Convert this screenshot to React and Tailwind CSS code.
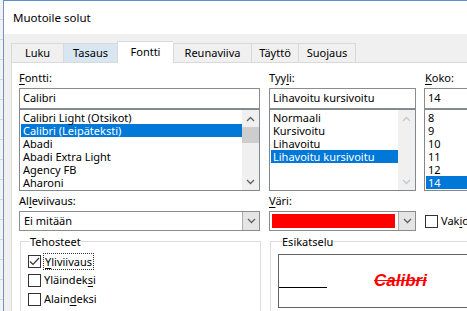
import React from "react";

const Chev = ({ up, color = "#606060" }) => (
  <svg width="9" height="6" viewBox="0 0 9 6">
    <path d={up ? "M1 5 L4.5 1.5 L8 5" : "M1 1 L4.5 4.5 L8 1"} fill="none" stroke={color} strokeWidth="1.3" />
  </svg>
);

const Row = ({ children, sel }) => (
  <div className={"h-[13px] leading-[13px] pl-[2px] whitespace-nowrap " + (sel ? "bg-[#0078d7] text-white" : "")}>{children}</div>
);

const Check = ({ checked }) => (
  <div className="w-[13px] h-[13px] border border-[#333333] bg-white flex items-center justify-center shrink-0">
    {checked && (
      <svg width="11" height="11" viewBox="0 0 11 11">
        <path d="M1 5.5 L4 8.5 L10 2" fill="none" stroke="#333333" strokeWidth="1.2" />
      </svg>
    )}
  </div>
);

const Tab = ({ children, w, active, hover }) => (
  <div
    className={
      "flex items-center justify-center border-t border-l border-[#d9d9d9] shrink-0 " +
      (active ? "h-[22px] bg-white relative z-10 -mb-px" : hover ? "h-[19px] bg-[#d8e6f2]" : "h-[19px] bg-[#f0f0f0]")
    }
    style={{ width: w }}
  >
    {children}
  </div>
);

export default function App() {
  return (
    <div className="w-[467px] h-[311px] overflow-hidden flex text-[11px] text-black" style={{ fontFamily: '"Noto Sans", sans-serif' }}>
      <div className="w-[3px] shrink-0 bg-[repeating-linear-gradient(to_bottom,#f2f2f2_0,#f2f2f2_19px,#d0d7e0_19px,#d0d7e0_20px)]" />
      <div className="w-px shrink-0 bg-[#6f94c4]" />
      <div className="flex-1 min-w-0 flex flex-col">
        <div className="h-px bg-[#5b8fd1] shrink-0" />
        <div className="h-[33px] shrink-0 bg-white flex items-center pl-[9px] text-[11.5px]">Muotoile solut</div>
        <div className="flex-1 bg-[#f0f0f0] pl-[7px] pt-[7px] flex flex-col min-h-0">
          <div className="flex items-end h-[21px] shrink-0">
            <Tab w={52}>Luku</Tab>
            <Tab w={54} hover>Tasaus</Tab>
            <Tab w={56} active>Fontti</Tab>
            <Tab w={78}>Reunaviiva</Tab>
            <Tab w={47}>Täyttö</Tab>
            <div className="border-r border-[#d9d9d9] shrink-0"><Tab w={57}>Suojaus</Tab></div>
          </div>
          <div className="flex-1 bg-white border-t border-l border-[#d9d9d9] pl-[7px] pt-[7px] flex flex-col min-h-0 overflow-hidden">
            {/* Row 1 */}
            <div className="flex shrink-0">
              <div className="w-[241px] shrink-0 flex flex-col">
                <div className="h-[15px] leading-[15px] mb-[3px]"><span className="underline underline-offset-2">F</span>ontti:</div>
                <div className="h-[21px] border border-[#8c8c8c] flex items-center pl-[3px]">Calibri</div>
                <div className="h-[82px] border border-[#828790] flex">
                  <div className="flex-1 pt-px pl-px">
                    <Row>Calibri Light (Otsikot)</Row>
                    <Row sel>Calibri (Leipäteksti)</Row>
                    <Row>Abadi</Row>
                    <Row>Abadi Extra Light</Row>
                    <Row>Agency FB</Row>
                    <Row>Aharoni</Row>
                  </div>
                  <div className="w-[17px] bg-[#f0f0f0] flex flex-col">
                    <div className="h-[17px] flex items-center justify-center"><Chev up /></div>
                    <div className="h-[16px] bg-[#cdcdcd]" />
                    <div className="flex-1" />
                    <div className="h-[17px] flex items-center justify-center"><Chev /></div>
                  </div>
                </div>
              </div>
              <div className="w-[147px] shrink-0 ml-[9px] flex flex-col">
                <div className="h-[15px] leading-[15px] mb-[3px]">Tyy<span className="underline underline-offset-2">l</span>i:</div>
                <div className="h-[21px] border border-[#8c8c8c] flex items-center pl-[3px] whitespace-nowrap">Lihavoitu kursivoitu</div>
                <div className="h-[82px] border border-[#828790] flex">
                  <div className="flex-1 pt-px pl-px">
                    <Row>Normaali</Row>
                    <Row>Kursivoitu</Row>
                    <Row>Lihavoitu</Row>
                    <Row sel>Lihavoitu kursivoitu</Row>
                  </div>
                  <div className="w-[17px] bg-[#f0f0f0] flex flex-col">
                    <div className="h-[17px] flex items-center justify-center"><Chev up color="#c8c8c8" /></div>
                    <div className="flex-1" />
                    <div className="h-[17px] flex items-center justify-center"><Chev color="#c8c8c8" /></div>
                  </div>
                </div>
              </div>
              <div className="w-[60px] ml-[8px] flex flex-col shrink-0">
                <div className="h-[15px] leading-[15px] mb-[3px] pl-px"><span className="underline underline-offset-2">K</span>oko:</div>
                <div className="h-[21px] border-y border-l border-[#8c8c8c] flex items-center pl-[3px]">14</div>
                <div className="h-[82px] border-y border-l border-[#828790] pt-px pl-px">
                  <Row>8</Row>
                  <Row>9</Row>
                  <Row>10</Row>
                  <Row>11</Row>
                  <Row>12</Row>
                  <Row sel>14</Row>
                </div>
              </div>
            </div>
            {/* Row 2 */}
            <div className="flex shrink-0 mt-[2px]">
              <div className="w-[241px] shrink-0 flex flex-col">
                <div className="h-[15px] leading-[15px] mb-[3px]">Al<span className="underline underline-offset-2">l</span>eviivaus:</div>
                <div className="h-[20px] border border-[#8c8c8c] flex items-center">
                  <div className="flex-1 pl-[4px]">Ei mitään</div>
                  <div className="w-[17px] h-full bg-[#e5e5e5] border-l border-[#adadad] flex items-center justify-center"><Chev /></div>
                </div>
              </div>
              <div className="w-[147px] shrink-0 ml-[9px] flex flex-col">
                <div className="h-[15px] leading-[15px] mb-[3px]"><span className="underline underline-offset-2">V</span>äri:</div>
                <div className="h-[20px] border border-[#8c8c8c] flex items-center">
                  <div className="flex-1 pl-[2px] pr-[3px]"><div className="h-[14px] bg-[#ff0000]" /></div>
                  <div className="w-[17px] h-full bg-[#e5e5e5] border-l border-[#adadad] flex items-center justify-center"><Chev /></div>
                </div>
              </div>
              <div className="ml-[9px] flex flex-col shrink-0">
                <div className="h-[15px] mb-[3px]" />
                <div className="h-[20px] flex items-center gap-[3px]">
                  <Check />
                  <span>Vak<span className="underline underline-offset-2">i</span>o</span>
                </div>
              </div>
            </div>
            {/* Row 3 */}
            <div className="flex shrink-0 mt-[3px]">
              <fieldset className="w-[241px] shrink-0 ml-px border border-[#dcdcdc] h-[80px] pl-[7px] pt-[3px]">
                <legend className="ml-[2px] leading-[15px]">Tehosteet</legend>
                <div className="flex flex-col">
                  <div className="h-[19px] flex items-center gap-[2px]">
                    <Check checked />
                    <span className="border border-dotted border-[#333333] px-px leading-[15px]"><span className="underline underline-offset-2">Y</span>liviivaus</span>
                  </div>
                  <div className="h-[19px] flex items-center gap-[3px]">
                    <Check />
                    <span>Yläindek<span className="underline underline-offset-2">s</span>i</span>
                  </div>
                  <div className="h-[19px] flex items-center gap-[3px]">
                    <Check />
                    <span>Alain<span className="underline underline-offset-2">d</span>eksi</span>
                  </div>
                </div>
              </fieldset>
              <fieldset className="w-[220px] ml-[9px] border border-[#dcdcdc] h-[80px] pl-[7px] pt-[5px] shrink-0">
                <legend className="ml-[4px] leading-[15px]">Esikatselu</legend>
                <div className="h-[54px] border border-[#646464] flex items-end">
                  <div className="w-[48px] h-px bg-black mb-[19px] shrink-0" />
                  <div className="ml-[47px] mb-[16px] text-[17px] leading-[20px] font-bold italic text-[#ff0000] line-through" style={{ fontFamily: '"Liberation Sans", sans-serif' }}>Calibri</div>
                </div>
              </fieldset>
            </div>
          </div>
        </div>
      </div>
    </div>
  );
}
